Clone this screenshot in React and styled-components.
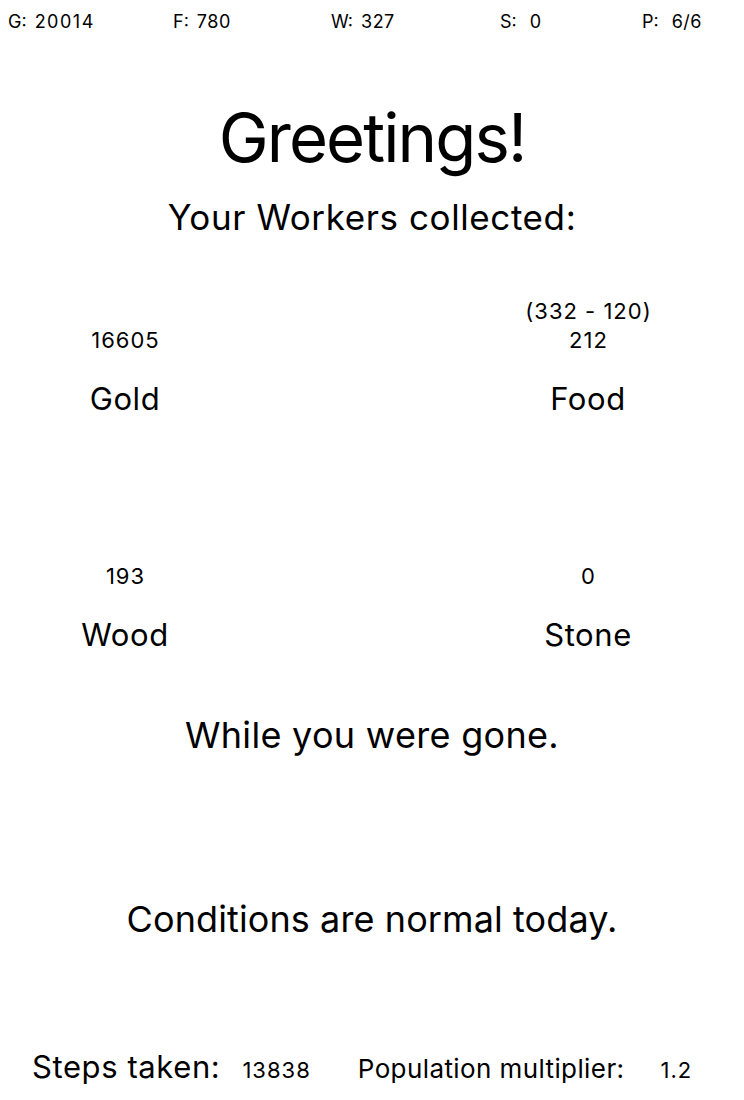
import React from "react";
import styled, { createGlobalStyle } from "styled-components";

const GlobalStyle = createGlobalStyle`
  html, body {
    margin: 0;
    padding: 0;
    background: #ffffff;
  }
  body {
    font-family: Inter, "Noto Sans", "Liberation Sans", sans-serif;
    color: #000000;
    -webkit-font-smoothing: antialiased;
  }
`;

const Screen = styled.div`
  width: 744px;
  min-height: 1100px;
  display: flex;
  flex-direction: column;
  background: #fff;
`;

const StatusBar = styled.div`
  display: grid;
  grid-template-columns: 165px 158px 169px 142px auto;
  padding: 13px 0 0 8px;
  font-size: 18px;
  line-height: 17px;
`;

const Stat = styled.div`
  display: flex;
  align-items: baseline;
`;

const StatKey = styled.span``;

const StatValue = styled.span`
  margin-left: ${(p) => p.$gap}px;
  letter-spacing: ${(p) => p.$spacing || 0.5}px;
`;

const Title = styled.h1`
  margin: 74px 0 0;
  font-size: 67px;
  font-weight: 400;
  line-height: 67px;
  letter-spacing: -1.9px;
  text-align: center;
`;

const Subtitle = styled.h2`
  margin: 28.7px 0 0;
  font-size: 35px;
  font-weight: 400;
  line-height: 35px;
  letter-spacing: 0.6px;
  text-align: center;
`;

const ResourceGrid = styled.div`
  display: grid;
  grid-template-columns: 200px 200px;
  justify-content: space-between;
  row-gap: 147.6px;
  margin-top: 62.1px;
  padding: 0 56px 0 25px;
`;

const ResourceCell = styled.div`
  display: flex;
  flex-direction: column;
  align-items: center;
  justify-content: flex-end;
`;

const Amount = styled.div`
  font-size: 22px;
  line-height: 29px;
  letter-spacing: 1px;
  margin-right: -1px;
`;

const ResourceName = styled.div`
  margin-top: 28.4px;
  font-size: 31px;
  line-height: 31px;
  letter-spacing: 0.6px;
`;

const Message = styled.p`
  margin: ${(p) => p.$top}px 0 0;
  font-size: 36px;
  line-height: 36px;
  letter-spacing: ${(p) => p.$spacing}px;
  text-align: center;
`;

const FooterRow = styled.div`
  display: flex;
  align-items: baseline;
  margin-top: 114.3px;
  padding-left: 32px;
  line-height: 31px;
`;

const FooterLabel = styled.span`
  font-size: ${(p) => p.$size}px;
  letter-spacing: ${(p) => p.$spacing}px;
  margin-left: ${(p) => p.$gap || 0}px;
`;

const FooterValue = styled.span`
  font-size: 22px;
  letter-spacing: 1px;
  margin-left: ${(p) => p.$gap}px;
`;

const stats = [
  { k: "G:", v: "20014", gap: 8, spacing: 1.5 },
  { k: "F:", v: "780", gap: 8 },
  { k: "W:", v: "327", gap: 8 },
  { k: "S:", v: "0", gap: 13 },
  { k: "P:", v: "6/6", gap: 13 },
];

const resources = [
  { name: "Gold", amount: "16605" },
  { name: "Food", amount: "212", note: "(332 - 120)" },
  { name: "Wood", amount: "193" },
  { name: "Stone", amount: "0" },
];

export default function App() {
  return (
    <>
      <GlobalStyle />
      <Screen>
        <StatusBar>
          {stats.map((s) => (
            <Stat key={s.k}>
              <StatKey>{s.k}</StatKey>
              <StatValue $gap={s.gap} $spacing={s.spacing}>{s.v}</StatValue>
            </Stat>
          ))}
        </StatusBar>
        <Title>Greetings!</Title>
        <Subtitle>Your Workers collected:</Subtitle>
        <ResourceGrid>
          {resources.map((r) => (
            <ResourceCell key={r.name}>
              {r.note && <Amount>{r.note}</Amount>}
              <Amount>{r.amount}</Amount>
              <ResourceName>{r.name}</ResourceName>
            </ResourceCell>
          ))}
        </ResourceGrid>
        <Message $top={66.6} $spacing={0.3}>While you were gone.</Message>
        <Message $top={148} $spacing={0.1}>Conditions are normal today.</Message>
        <FooterRow>
          <FooterLabel $size={31} $spacing={0.6}>Steps taken:</FooterLabel>
          <FooterValue $gap={22}>13838</FooterValue>
          <FooterLabel $size={26} $spacing={0.4} $gap={47}>Population multiplier:</FooterLabel>
          <FooterValue $gap={36}>1.2</FooterValue>
        </FooterRow>
      </Screen>
    </>
  );
}
